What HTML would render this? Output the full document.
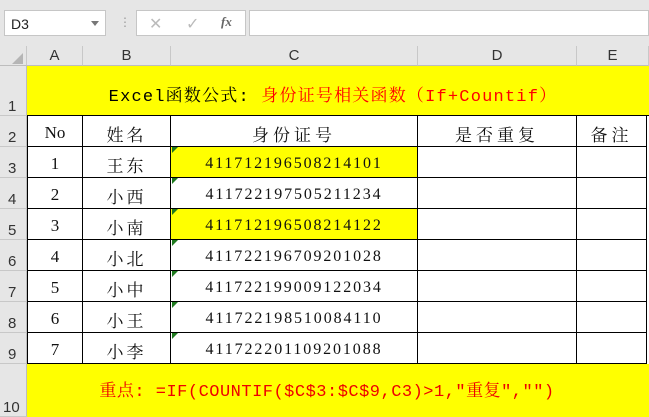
<!DOCTYPE html>
<html><head><meta charset="utf-8"><style>
*{margin:0;padding:0;box-sizing:border-box}
body{width:649px;height:417px;position:relative;background:#fff;overflow:hidden;font-family:"Liberation Serif","Noto Serif CJK SC",serif}
.a{position:absolute}
.tb{left:0;top:0;width:649px;height:46px;background:#e6e6e6}
.box{background:#fff;border:1px solid #c6c6c6}
.ch{position:absolute;top:46px;height:20px;background:#e6e6e6;border-right:1px solid #c8c8c8;border-bottom:1px solid #bdbdbd;font:15px "Liberation Sans",sans-serif;color:#333;text-align:center;line-height:20px}
.rh{position:absolute;left:0;width:27px;background:#e6e6e6;border-bottom:1px solid #c8c8c8;border-right:1px solid #bdbdbd;font:15px "Liberation Sans",sans-serif;color:#333;padding-left:8px;display:flex;align-items:flex-end}
.c{position:absolute;display:flex;align-items:center;justify-content:center;font-size:17px;color:#111;border-right:1px solid #000;border-bottom:1px solid #000;padding-top:4px}
.num{letter-spacing:1.9px;font-size:16px}
.tri{position:absolute;width:0;height:0;border-top:6px solid #1e7a1e;border-right:6px solid transparent}
.m{font-family:"Liberation Mono","Noto Serif CJK SC",monospace}
</style></head><body>
<div class="a tb"></div>
<div class="a box" style="left:4px;top:10px;width:102px;height:26px;font:14px 'Liberation Sans',sans-serif;padding:5px 6px;color:#222">D3<span style="position:absolute;right:6px;top:10px;border-top:5px solid #777;border-left:4px solid transparent;border-right:4px solid transparent"></span></div>
<div class="a" style="left:119px;top:15px;color:#999;font:12px sans-serif">⋮</div>
<div class="a box" style="left:136px;top:10px;width:110px;height:26px;color:#bbb;font:16px 'Liberation Sans',sans-serif"><span class="a" style="left:12px;top:3px">✕</span><span class="a" style="left:49px;top:3px">✓</span><span class="a" style="left:84px;top:3px;color:#666;font:italic bold 13px 'Liberation Serif',serif">fx</span></div>
<div class="a box" style="left:249px;top:10px;width:400px;height:26px"></div>
<div class="a" style="left:0;top:37px;width:649px;height:9px;background:#e6e6e6"></div>
<div class="ch" style="left:0;width:27px"></div>
<div class="a" style="left:12px;top:53px;border-bottom:11px solid #b5b5b5;border-left:11px solid transparent"></div>
<div class="ch" style="left:27px;width:56px">A</div>
<div class="ch" style="left:83px;width:88px">B</div>
<div class="ch" style="left:171px;width:247px">C</div>
<div class="ch" style="left:418px;width:159px">D</div>
<div class="ch" style="left:577px;width:72px">E</div>
<div class="rh" style="top:66px;height:50px">1</div>
<div class="rh" style="top:116px;height:31px">2</div>
<div class="rh" style="top:147px;height:31px">3</div>
<div class="rh" style="top:178px;height:31px">4</div>
<div class="rh" style="top:209px;height:31px">5</div>
<div class="rh" style="top:240px;height:31px">6</div>
<div class="rh" style="top:271px;height:31px">7</div>
<div class="rh" style="top:302px;height:31px">8</div>
<div class="rh" style="top:333px;height:31px">9</div>
<div class="rh" style="top:364px;height:53px;padding-left:3px">10</div>
<div class="a m" style="left:27px;top:66px;width:622px;height:50px;background:#ffff00;border-bottom:1px solid #000;display:flex;align-items:center;justify-content:center;font-size:17px;letter-spacing:1.2px;padding-top:6px;padding-right:10px"><span>Excel函数公式: <span style="color:#f00">身份证号相关函数（If+Countif）</span></span></div>
<div class="a m" style="left:27px;top:364px;width:622px;height:53px;background:#ffff00;display:flex;align-items:center;justify-content:center;font-size:17px;color:#e00;letter-spacing:0.5px;padding-right:22px;padding-bottom:4px">重点: =IF(COUNTIF($C$3:$C$9,C3)&gt;1,"重复","")</div>
<div id="g"></div>
<script>
var rows=[["No","姓名","身份证号","是否重复","备注"],["1","王东","411712196508214101"],["2","小西","411722197505211234"],["3","小南","411712196508214122"],["4","小北","411722196709201028"],["5","小中","411722199009122034"],["6","小王","411722198510084110"],["7","小李","411722201109201088"]];
var xs=[27,83,171,418,577,647],h="";
for(var r=0;r<8;r++){var y=116+r*31;for(var c=0;c<5;c++){var t=rows[r][c]||"";var bg=(c==2&&(r==1||r==3))?"background:#ffff00;":"";var cls="c"+(c==2&&r>0?" num":"");var ls=(r==0&&c>1)?"letter-spacing:4px;":(c==1?"letter-spacing:3px;":"");h+='<div class="'+cls+'" style="'+bg+ls+'left:'+xs[c]+'px;top:'+y+'px;width:'+(xs[c+1]-xs[c])+'px;height:31px;'+(c==0?'border-left:1px solid #000;':'')+'">'+t+'</div>';if(c==2&&r>0)h+='<div class="tri" style="left:'+(xs[c]+1)+'px;top:'+y+'px"></div>';}}
document.getElementById("g").innerHTML=h;
</script>
</body></html>
